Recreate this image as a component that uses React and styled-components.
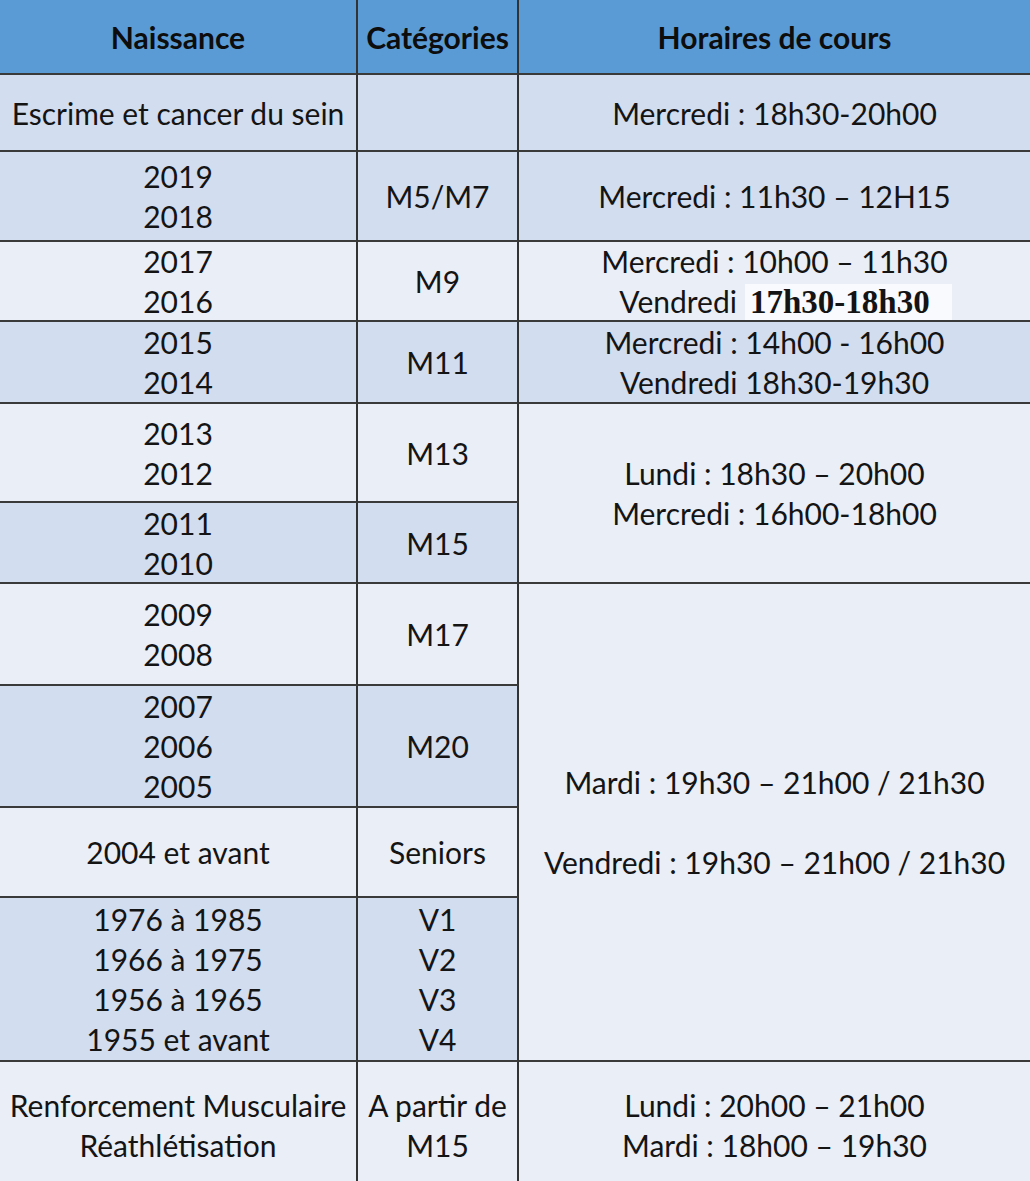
import React from "react";
import styled, { createGlobalStyle } from "styled-components";

const GlobalStyle = createGlobalStyle`
  html, body {
    margin: 0;
    padding: 0;
    background: #e9eef7;
  }
  body {
    font-family: Lato, "Noto Sans", "Liberation Sans", sans-serif;
    color: #141414;
  }
`;

const Table = styled.div`
  display: grid;
  width: 1030px;
  grid-template-columns: 358px 161px 1fr;
  grid-template-rows: 75px 77px 90px 80px 82px 99px 81px 102px 122px 90px 164px 119px;
`;

const tones = {
  head: "#5b9bd5",
  dark: "#d2ddef",
  light: "#e9eef7",
};

const Cell = styled.div`
  box-sizing: border-box;
  display: flex;
  flex-direction: column;
  align-items: center;
  justify-content: center;
  text-align: center;
  white-space: nowrap;
  grid-row: span ${(p) => p.$span || 1};
  background: ${(p) => tones[p.$tone]};
  border-right: ${(p) => (p.$last ? "none" : "2px solid #333")};
  border-bottom: ${(p) => (p.$end ? "none" : "2px solid #3a3a3a")};
  padding-top: ${(p) => (p.$end ? "6px" : "0")};
  font-size: 30px;
  line-height: 40px;
  font-weight: ${(p) => (p.$tone === "head" ? 700 : 400)};
  color: ${(p) => (p.$tone === "head" ? "#0d0d0d" : "#141414")};
`;

const Line = styled.span`
  display: block;
  min-height: 40px;
`;

const Patch = styled.span`
  font-family: "Liberation Serif", "Times New Roman", serif;
  font-weight: 700;
  font-size: 33px;
  background: #f9fafd;
  padding: 0 22px 0 5px;
  margin: 0 -22px 0 8px;
`;

const Lines = ({ items }) =>
  items.map((t, i) => <Line key={i}>{t}</Line>);

// each entry: [text lines, tone, rowSpan]
const rows = [
  [[["Escrime et cancer du sein"], "dark"], [[""], "dark"], [["Mercredi : 18h30-20h00"], "dark"]],
  [[["2019", "2018"], "dark"], [["M5/M7"], "dark"], [["Mercredi : 11h30 – 12H15"], "dark"]],
  [
    [["2017", "2016"], "light"],
    [["M9"], "light"],
    [["Mercredi : 10h00 – 11h30", <>Vendredi<Patch>17h30-18h30</Patch></>], "light"],
  ],
  [[["2015", "2014"], "dark"], [["M11"], "dark"], [["Mercredi : 14h00 - 16h00", "Vendredi 18h30-19h30"], "dark"]],
  [[["2013", "2012"], "light"], [["M13"], "light"], [["Lundi : 18h30 – 20h00", "Mercredi : 16h00-18h00"], "light", 2]],
  [[["2011", "2010"], "dark"], [["M15"], "dark"]],
  [
    [["2009", "2008"], "light"],
    [["M17"], "light"],
    [["Mardi : 19h30 – 21h00 / 21h30", "", "Vendredi : 19h30 – 21h00 / 21h30"], "light", 4],
  ],
  [[["2007", "2006", "2005"], "dark"], [["M20"], "dark"]],
  [[["2004 et avant"], "light"], [["Seniors"], "light"]],
  [[["1976 à 1985", "1966 à 1975", "1956 à 1965", "1955 et avant"], "dark"], [["V1", "V2", "V3", "V4"], "dark"]],
  [
    [["Renforcement Musculaire", "Réathlétisation"], "light"],
    [["A partir de", "M15"], "light"],
    [["Lundi : 20h00 – 21h00", "Mardi : 18h00 – 19h30"], "light"],
  ],
];

const headers = ["Naissance", "Catégories", "Horaires de cours"];

export default function App() {
  return (
    <>
      <GlobalStyle />
      <Table>
        {headers.map((h, i) => (
          <Cell key={h} $tone="head" $last={i === 2}>
            {h}
          </Cell>
        ))}
        {rows.map((row, r) =>
          row.map(([items, tone, span], c) => (
            <Cell
              key={`${r}-${c}`}
              $tone={tone}
              $span={span}
              $last={c === 2}
              $end={r === rows.length - 1}
            >
              <Lines items={items} />
            </Cell>
          ))
        )}
      </Table>
    </>
  );
}
